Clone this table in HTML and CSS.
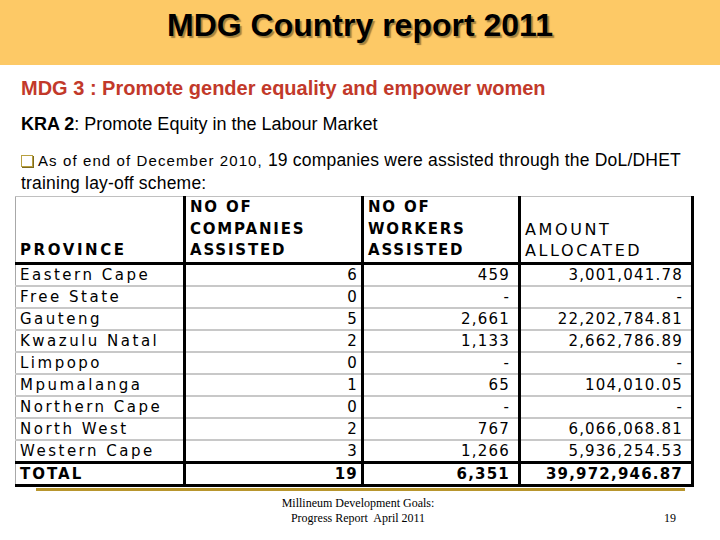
FILE: index.html
```html
<!DOCTYPE html>
<html>
<head>
<meta charset="utf-8">
<link rel="stylesheet" href="styles.css">
</head>
<body>
<div class="slide">
  <header class="banner">
    <h1 class="title">MDG Country report 2011</h1>
  </header>
  <section class="content">
    <h2 class="goal">MDG 3 : Promote gender equality and empower women</h2>
    <p class="kra"><b>KRA 2</b>: Promote Equity in the Labour Market</p>
    <p class="bullet"><span class="box"></span><span class="small">As of end of December 2010,</span> 19 companies were assisted through the DoL/DHET<br>training lay-off scheme:</p>
  </section>
  <div class="table-wrap">
    <table class="data">
      <colgroup>
        <col class="c1"><col class="c2"><col class="c3"><col class="c4">
      </colgroup>
      <thead>
        <tr>
          <th class="bold">PROVINCE</th>
          <th class="bold">NO OF<br>COMPANIES<br>ASSISTED</th>
          <th class="bold">NO OF<br>WORKERS<br>ASSISTED</th>
          <th>AMOUNT<br>ALLOCATED</th>
        </tr>
      </thead>
      <tbody>
        <tr><td>Eastern Cape</td><td class="num">6</td><td class="num">459</td><td class="num">3,001,041.78</td></tr>
        <tr><td>Free State</td><td class="num">0</td><td class="num">-</td><td class="num">-</td></tr>
        <tr><td>Gauteng</td><td class="num">5</td><td class="num">2,661</td><td class="num">22,202,784.81</td></tr>
        <tr><td>Kwazulu Natal</td><td class="num">2</td><td class="num">1,133</td><td class="num">2,662,786.89</td></tr>
        <tr><td>Limpopo</td><td class="num">0</td><td class="num">-</td><td class="num">-</td></tr>
        <tr><td>Mpumalanga</td><td class="num">1</td><td class="num">65</td><td class="num">104,010.05</td></tr>
        <tr><td>Northern Cape</td><td class="num">0</td><td class="num">-</td><td class="num">-</td></tr>
        <tr><td>North West</td><td class="num">2</td><td class="num">767</td><td class="num">6,066,068.81</td></tr>
        <tr><td>Western Cape</td><td class="num">3</td><td class="num">1,266</td><td class="num">5,936,254.53</td></tr>
        <tr class="total"><td>TOTAL</td><td class="num">19</td><td class="num">6,351</td><td class="num">39,972,946.87</td></tr>
      </tbody>
    </table>
    <div class="shadow"></div>
  </div>
  <footer class="foot">
    <div></div>
    <div class="foot-text">Millineum Development Goals:<br>Progress Report&nbsp; April 2011</div>
    <div class="page">19</div>
  </footer>
</div>
</body>
</html>
```
FILE: styles.css
```css
html, body {
  margin: 0;
  padding: 0;
  background: #ffffff;
}
.slide {
  width: 720px;
  height: 540px;
  overflow: hidden;
  font-family: "Liberation Sans", Arial, sans-serif;
  color: #000;
}
.banner {
  height: 65px;
  background: #fdc966;
  display: flex;
  justify-content: center;
}
.title {
  margin: 7px 0 0 0;
  font-size: 32px;
  line-height: 36px;
  font-weight: bold;
  text-shadow: 2px 2px 1px rgba(90, 70, 30, 0.55);
}
.content {
  padding: 0 0 0 21px;
}
.goal {
  margin: 11px 0 0 0;
  font-size: 20px;
  line-height: 24px;
  font-weight: bold;
  color: #c2392a;
}
.kra {
  margin: 13px 0 0 0;
  font-size: 18px;
  line-height: 22px;
}
.bullet {
  margin: 14px 0 0 0;
  font-size: 17.5px;
  letter-spacing: 0.2px;
  line-height: 23px;
}
.bullet .small {
  font-size: 15px;
  letter-spacing: 1.1px;
}
.box {
  display: inline-block;
  width: 10px;
  height: 10px;
  border: 1px solid #b8a040;
  background: #fff;
  box-shadow: 1px 1px 0 #7d6a1e;
  margin-right: 5px;
  vertical-align: -1px;
}
.table-wrap {
  margin: 1px 0 0 15px;
  width: 677px;
}
.data {
  border-collapse: collapse;
  table-layout: fixed;
  width: 677px;
  font-family: "DejaVu Sans", sans-serif;
  font-size: 15px;
  letter-spacing: 1.2px;
}
.c1 { width: 169px; }
.c2 { width: 178px; }
.c3 { width: 157px; }
.c4 { width: 173px; }
.data th {
  height: 64px;
  font-weight: normal;
  font-size: 16px;
  text-align: left;
  vertical-align: bottom;
  line-height: 21.5px;
  letter-spacing: 2.6px;
  padding: 0 4px 0 4px;
  border-top: 1px solid #c0c0c0;
  border-bottom: 3px solid #000;
  border-right: 3px solid #000;
}
.data th.bold {
  font-weight: bold;
  font-size: 15px;
  letter-spacing: 1.8px;
}
.data th:first-child {
  letter-spacing: 2.6px;
}
.data th:first-child, .data td:first-child {
  border-left: 1px solid #a8a8a8;
}
.data td {
  height: 20px;
  line-height: 20px;
  padding: 0 4px;
  border-bottom: 2px solid #c8c8c8;
  border-right: 3px solid #000;
  white-space: nowrap;
}
.data td:first-child {
  letter-spacing: 2.5px;
}
.data td.num {
  text-align: right;
  padding-right: 8px;
}
.data td:nth-child(2) {
  padding-right: 3px;
}
.data tr.total td {
  font-weight: bold;
  border-top: 3px solid #000;
  border-bottom: 3px solid #000;
}
.data tr.total td:first-child {
  letter-spacing: 2px;
}
.shadow {
  margin: 1px 0 0 21px;
  width: 649px;
  height: 3px;
  background: #b8962e;
}
.foot {
  display: grid;
  grid-template-columns: 1fr auto 1fr;
  margin-top: 5px;
  font-family: "Liberation Serif", "Times New Roman", serif;
  font-size: 12px;
  line-height: 15px;
}
.foot-text {
  text-align: center;
  margin-left: -4px;
}
.page {
  justify-self: end;
  align-self: end;
  padding-right: 44px;
}
```
